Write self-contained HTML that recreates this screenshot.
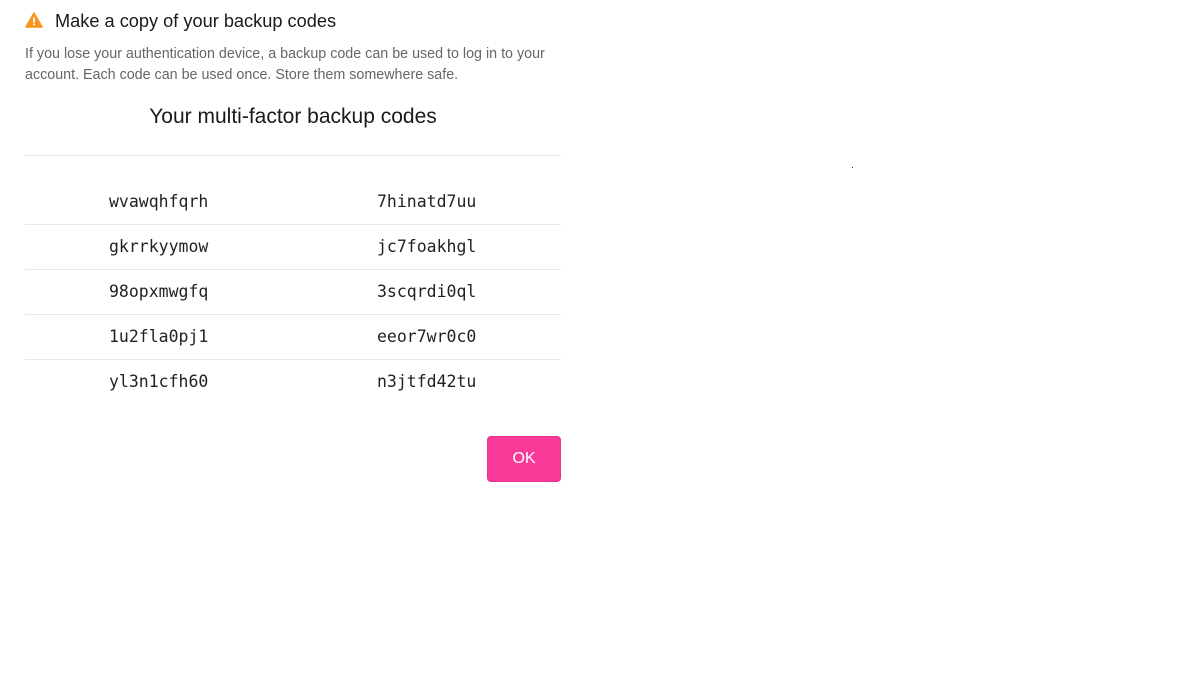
<!DOCTYPE html>
<html><head><meta charset="utf-8"><style>
body{margin:0;width:1200px;height:675px;background:#fff;font-family:"Liberation Sans",sans-serif;position:relative;overflow:hidden}
.a{position:absolute;white-space:nowrap}
.t{left:55px;top:10px;font-size:18.2px;color:#1a1a1a;line-height:22px}
.p{left:25px;top:44px;font-size:14.3px;color:#666;line-height:21px}
.h{left:25px;width:536px;text-align:center;top:105px;font-size:21px;color:#1a1a1a;line-height:24px}
.l{left:25px;width:536px;height:1px;background:#e8e8e8}
.c{font-family:"DejaVu Sans Mono","Liberation Mono",monospace;font-size:16.5px;color:#222;line-height:20px}
.ok{left:487px;top:436px;width:72px;height:44px;border:1px solid #e8338f;border-radius:4px;background:#f93a99;color:#fff;font-size:16px;text-align:center;line-height:44px}
</style></head><body>
<svg class="a" style="left:25px;top:12px" width="18" height="16" viewBox="0 0 18 16"><path d="M9 1 L17 15 H1 Z" fill="#f7941d" stroke="#f7941d" stroke-width="1.5" stroke-linejoin="round"/><rect x="8.1" y="5.5" width="1.8" height="5" fill="#fff"/><rect x="8.1" y="11.6" width="1.8" height="1.8" fill="#fff"/></svg>
<div class="a t">Make a copy of your backup codes</div>
<div class="a p">If you lose your authentication device, a backup code can be used to log in to your<br>account. Each code can be used once. Store them somewhere safe.</div>
<div class="a h">Your multi-factor backup codes</div>
<div class="a l" style="top:155px"></div>
<div class="a l" style="top:224px"></div>
<div class="a l" style="top:269px"></div>
<div class="a l" style="top:314px"></div>
<div class="a l" style="top:359px"></div>
<div class="a c" style="left:109px;top:192px">wvawqhfqrh</div><div class="a c" style="left:377px;top:192px">7hinatd7uu</div>
<div class="a c" style="left:109px;top:237px">gkrrkyymow</div><div class="a c" style="left:377px;top:237px">jc7foakhgl</div>
<div class="a c" style="left:109px;top:282px">98opxmwgfq</div><div class="a c" style="left:377px;top:282px">3scqrdi0ql</div>
<div class="a c" style="left:109px;top:327px">1u2fla0pj1</div><div class="a c" style="left:377px;top:327px">eeor7wr0c0</div>
<div class="a c" style="left:109px;top:372px">yl3n1cfh60</div><div class="a c" style="left:377px;top:372px">n3jtfd42tu</div>
<div class="a ok">OK</div>
<div class="a" style="left:852px;top:167px;width:1px;height:1px;background:#333"></div>
</body></html>
